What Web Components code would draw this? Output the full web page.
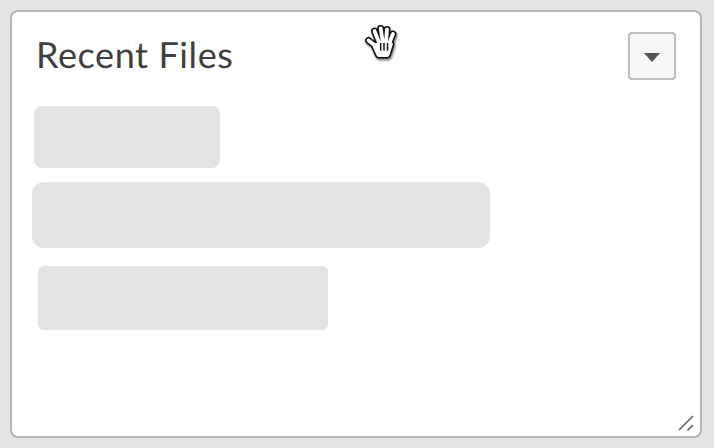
<!DOCTYPE html>
<html>
<head>
<meta charset="utf-8">
<title>Recent Files</title>
<style>
  html, body { margin: 0; height: 100%; background: #e3e3e3; overflow: hidden; }
  body { padding: 10px 12px 10px 10px; box-sizing: border-box; height: 448px; font-family: Lato, sans-serif; }
</style>
</head>
<body>
<files-panel heading="Recent Files">
  <file-skeleton style="--w:186px;--h:62px;--x:22px;--r:8px;--gap:14px"></file-skeleton>
  <file-skeleton style="--w:458px;--h:66px;--x:20px;--r:12px;--gap:18px"></file-skeleton>
  <file-skeleton style="--w:290px;--h:64px;--x:26px;--r:6px;--gap:0px"></file-skeleton>
</files-panel>
<script>
const panelTemplate = document.createElement('template')
panelTemplate.innerHTML = `
<style>
  :host {
    display: flex;
    flex-direction: column;
    position: relative;
    height: 428px;
    box-sizing: border-box;
    background: #fff;
    border: 2px solid #b7b7b7;
    border-radius: 8px;
  }
  header {
    display: flex;
    justify-content: space-between;
    align-items: flex-start;
    padding: 20px 24px 0 24px;
    height: 74px;
    box-sizing: border-box;
  }
  h2 {
    margin: 0;
    font: 400 36px/44px Lato, sans-serif;
    letter-spacing: 0.6px;
    color: #3f3f3f;
    text-rendering: geometricPrecision;
  }
  .list { display: flex; flex-direction: column; padding-top: 20px; }
  .cursor { position: absolute; left: 352px; top: 10px; width: 38px; height: 40px; }
  .grip { position: absolute; right: 6px; bottom: 5px; width: 16px; height: 16px; }
</style>
<header>
  <h2></h2>
  <drop-button></drop-button>
</header>
<div class="list"><slot></slot></div>
<svg class="cursor" viewBox="0 0 38 40">
  <defs>
    <filter id="blur" x="-30%" y="-30%" width="160%" height="160%"><feGaussianBlur stdDeviation="1.2"/></filter>
    <path id="hand" stroke-linecap="round" stroke-linejoin="round" d="M12.700 24.700 4.500 18.500M15.300 21.300 10.500 9M18.700 19.700 16.700 6.500M22 19.700 23 7.500M25.300 21.300 29 12M10 23 14.500 33H23.500L27 22Z"/>
  </defs>
  <use href="#hand" transform="translate(1 2)" fill="#000" stroke="#000" stroke-width="7" opacity=".5" filter="url(#blur)"/>
  <use href="#hand" fill="#111" stroke="#111" stroke-width="7"/>
  <use href="#hand" fill="#fff" stroke="#fff" stroke-width="3.800"/>
  <path fill="none" stroke="#111" stroke-width="1.500" d="M16.700 21v7.500M20 21v7.500M23.500 21v7.500"/>
</svg>
<svg class="grip" viewBox="0 0 16 16">
  <path fill="none" stroke="#666" stroke-width="1.600" d="M1 15 15 1M9.500 15.500 15 10"/>
</svg>
`
customElements.define('files-panel', class extends HTMLElement {
  connectedCallback () {
    this.attachShadow({ mode: 'open' })
    this.shadowRoot.appendChild(panelTemplate.content.cloneNode(true))
    this.shadowRoot.querySelector('h2').textContent = this.getAttribute('heading')
  }
})

const buttonTemplate = document.createElement('template')
buttonTemplate.innerHTML = `
<style>
  :host { display: block; }
  button {
    display: flex;
    align-items: center;
    justify-content: center;
    width: 48px;
    height: 48px;
    padding: 0;
    background: #f6f6f6;
    border: 2px solid #bdbdbd;
    border-radius: 4px;
  }
  i {
    width: 0;
    height: 0;
    margin-top: 3px;
    border-left: 8px solid transparent;
    border-right: 8px solid transparent;
    border-top: 9px solid #555;
  }
</style>
<button><i></i></button>
`
customElements.define('drop-button', class extends HTMLElement {
  connectedCallback () {
    this.attachShadow({ mode: 'open' })
    this.shadowRoot.appendChild(buttonTemplate.content.cloneNode(true))
  }
})

const skeletonTemplate = document.createElement('template')
skeletonTemplate.innerHTML = `
<style>
  :host {
    display: block;
    width: var(--w);
    height: var(--h);
    margin-left: var(--x);
    margin-bottom: var(--gap);
    background: #e3e3e3;
    border-radius: var(--r);
  }
</style>
`
customElements.define('file-skeleton', class extends HTMLElement {
  connectedCallback () {
    this.attachShadow({ mode: 'open' })
    this.shadowRoot.appendChild(skeletonTemplate.content.cloneNode(true))
  }
})
</script>
</body>
</html>
